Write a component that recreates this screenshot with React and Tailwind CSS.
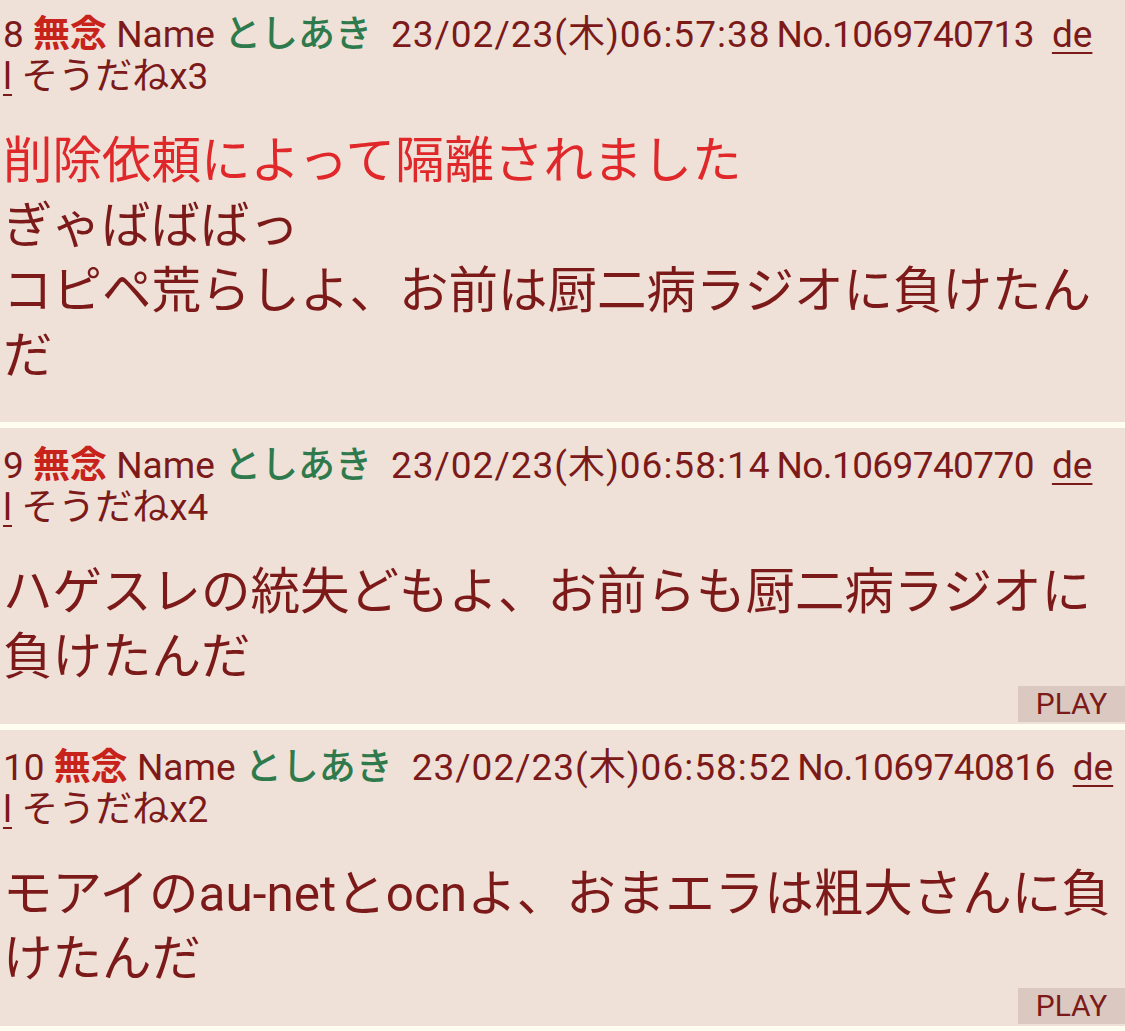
import React from "react";

const posts = [
  {
    no: "8",
    date: "23/02/23(木)06:57:38",
    id: "No.1069740713",
    sodane: "そうだねx3",
    notice: "削除依頼によって隔離されました",
    lines: ["ぎゃばばばっ", "コピペ荒らしよ、お前は厨二病ラジオに負けたん", "だ"],
    play: false,
    first: true,
  },
  {
    no: "9",
    date: "23/02/23(木)06:58:14",
    id: "No.1069740770",
    sodane: "そうだねx4",
    lines: ["ハゲスレの統失どもよ、お前らも厨二病ラジオに", "負けたんだ"],
    play: true,
  },
  {
    no: "10",
    date: "23/02/23(木)06:58:52",
    id: "No.1069740816",
    sodane: "そうだねx2",
    lines: ["モアイのau-netとocnよ、おまエラは粗大さんに負", "けたんだ"],
    play: true,
  },
];

const Post = ({ post }) => {
  return (
    <div
      className={
        "bg-[#efe1d8] pl-[3px] text-[#7c1a1a] " +
        (post.first ? "pt-[14px] pb-[33px]" : "pt-[17px] pb-[2px]")
      }
    >
      {/* header */}
      <div className="font-['Roboto','Noto_Sans_CJK_JP',sans-serif] text-[37px] leading-[42px] whitespace-nowrap">
        <div>
          <span>{post.no}</span>{" "}
          <span className="font-bold text-[#c8231b]">無念</span>{" "}
          <span>Name</span>{" "}
          <span className="font-medium text-[#2f7a4c]">としあき</span>
          <span className="ml-[19px] tracking-[1px]">{post.date}</span>
          <span className="ml-[6px] tracking-[-0.6px]">{post.id}</span>
          <span className="ml-[18px] underline decoration-2 underline-offset-[5px]">de</span>
        </div>
        <div>
          <span className="underline decoration-2 underline-offset-[5px]">l</span>{" "}
          <span>{post.sodane}</span>
        </div>
      </div>

      {/* body */}
      <div className="mt-[31px] font-['Roboto','Noto_Sans_CJK_JP',sans-serif] text-[49.5px] leading-[65px] whitespace-nowrap">
        {post.notice && <div className="text-[#e0282a]">{post.notice}</div>}
        {post.lines.map((line, i) => (
          <div key={i}>{line}</div>
        ))}
      </div>

      {post.play && (
        <div className="-mt-[4px] flex justify-end">
          <div className="flex h-[36px] w-[107px] items-center justify-center bg-[#dbc9c1] font-['Roboto',sans-serif] text-[30px] leading-none text-[#7c1a1a]">
            PLAY
          </div>
        </div>
      )}
    </div>
  );
};

export default function App() {
  return (
    <div className="w-[1125px] h-[1031px] overflow-hidden bg-[#fffdf0]">
      {posts.map((post) => (
        <div key={post.no}>
          <Post post={post} />
          <div className="h-[6px] bg-[#fffdf0]" />
        </div>
      ))}
    </div>
  );
}
